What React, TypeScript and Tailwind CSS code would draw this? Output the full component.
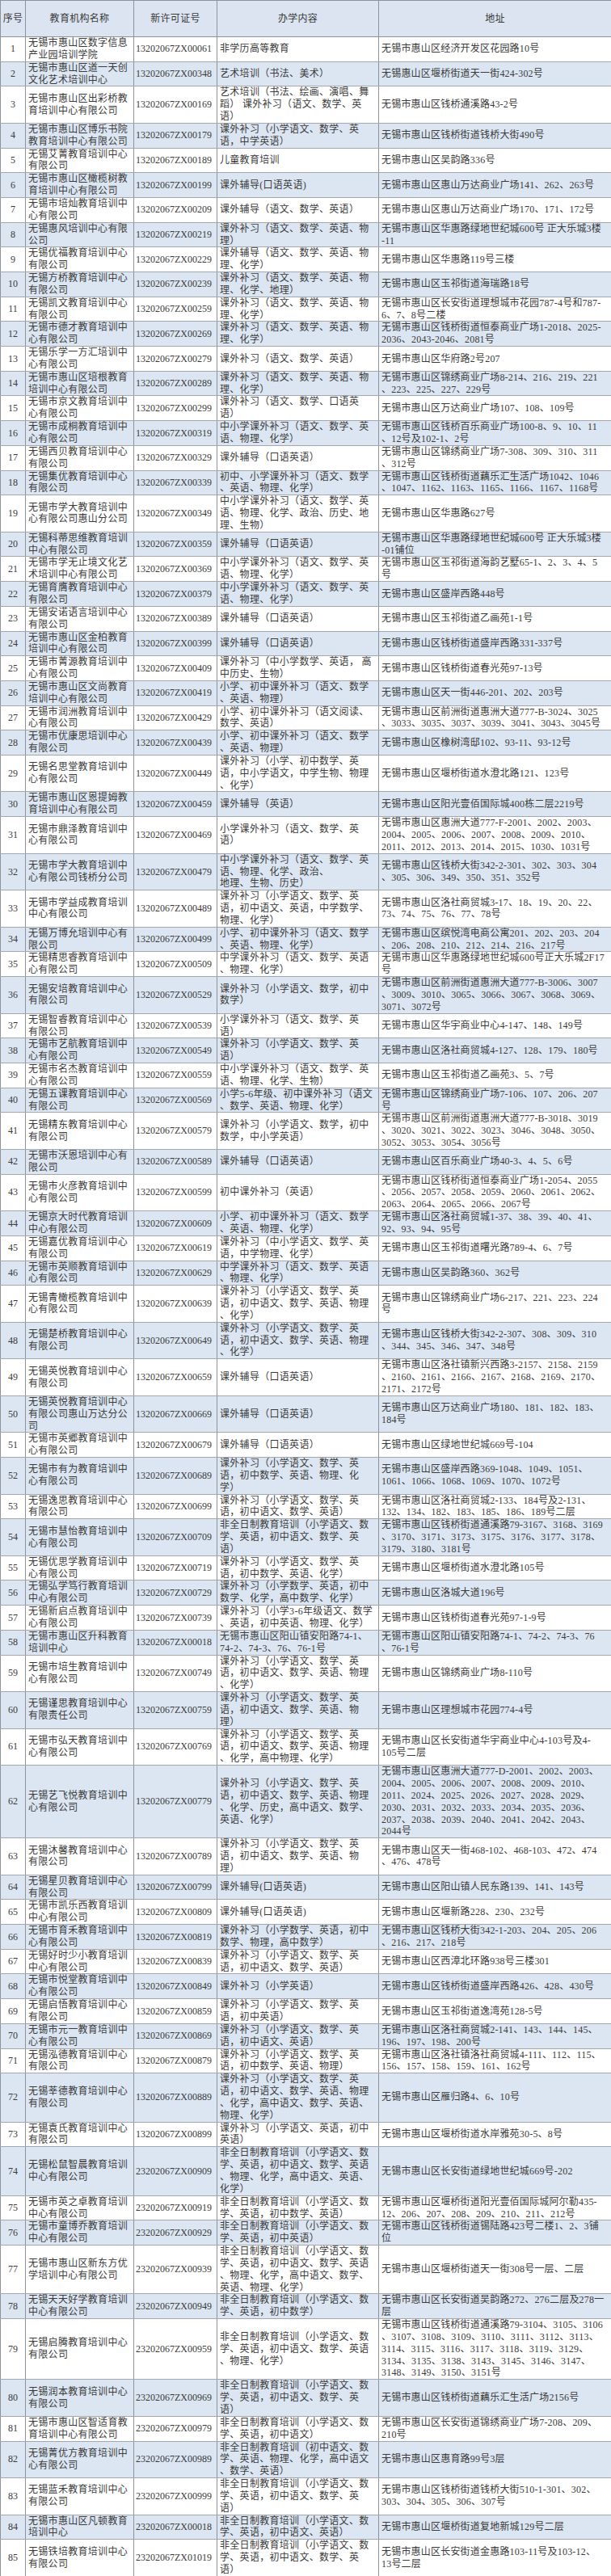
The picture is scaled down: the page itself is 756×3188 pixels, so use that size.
type Row = [string, string, string, string];

const rows: Row[] = [
  ['无锡市惠山区数字信息\n产业园培训学院', '13202067ZX00061', '非学历高等教育', '无锡市惠山区经济开发区花园路10号'],
  ['无锡市惠山区道一天创\n文化艺术培训中心', '13202067ZX00348', '艺术培训（书法、美术）', '无锡惠山区堰桥街道天一街424-302号'],
  ['无锡市惠山区出彩桥教\n育培训中心有限公司', '13202067ZX00169', '艺术培训（书法、绘画、演唱、舞\n蹈） 课外补习（语文、数学、英\n语）', '无锡市惠山区钱桥通溪路43-2号'],
  ['无锡市惠山区博乐书院\n教育培训中心有限公司', '13202067ZX00179', '课外补习（小学语文、数学、英\n语，中学英语）', '无锡市惠山区钱桥街道钱桥大街490号'],
  ['无锡艾菁教育培训中心\n有限公司', '13202067ZX00189', '儿童教育培训', '无锡市惠山区吴韵路336号'],
  ['无锡市惠山区橄榄树教\n育培训中心有限公司', '13202067ZX00199', '课外辅导(口语英语)', '无锡市惠山区惠山万达商业广场141、262、263号'],
  ['无锡市培灿教育培训中\n心有限公司', '13202067ZX00209', '课外辅导（语文、数学、英语）', '无锡市惠山区惠山万达商业广场170、171、172号'],
  ['无锡惠风培训中心有限\n公司', '13202067ZX00219', '课外补习（语文、数学、英语、物\n理）', '无锡市惠山区华惠路绿地世纪城600号 正大乐城3楼\n-11'],
  ['无锡优福教育培训中心\n有限公司', '13202067ZX00229', '课外辅导（语文、数学、英语、物\n理、化学）', '无锡市惠山区华惠路119号三楼'],
  ['无锡方桥教育培训中心\n有限公司', '13202067ZX00239', '课外补习（语文、数学、英语、物\n理、化学、地理）', '无锡市惠山区玉祁街道海瑞路18号'],
  ['无锡凯文教育培训中心\n有限公司', '13202067ZX00259', '课外补习（语文、数学、英语、物\n理、化学）', '无锡市惠山区长安街道理想城市花园787-4号和787-\n6、7、8号二楼'],
  ['无锡市德才教育培训中\n心有限公司', '13202067ZX00269', '课外补习（语文、数学、英语、物\n理、化学）', '无锡市惠山区钱桥街道恒泰商业广场1-2018、2025-\n2036、2043-2046、2081号'],
  ['无锡乐学一方汇培训中\n心有限公司', '13202067ZX00279', '课外补习（语文、数学、英语）', '无锡市惠山区华府路2号207'],
  ['无锡市惠山区培根教育\n培训中心有限公司', '13202067ZX00289', '课外补习（语文、数学、英语、物\n理、化学）', '无锡市惠山区锦绣商业广场8-214、216、219、221\n、223、225、227、229号'],
  ['无锡市京文教育培训中\n心有限公司', '13202067ZX00299', '课外补习（语文、数学、口语英\n语）', '无锡市惠山区万达商业广场107、108、109号'],
  ['无锡市成桐教育培训中\n心有限公司', '13202067ZX00319', '中小学课外补习（语文、数学、英\n语、物理、化学）', '无锡市惠山区钱桥百乐商业广场100-8、9、10、11\n、12号及102-1、2号'],
  ['无锡西贝教育培训中心\n有限公司', '13202067ZX00329', '课外辅导（口语英语）', '无锡市惠山区锦绣商业广场7-308、309、310、311\n、312号'],
  ['无锡集优教育培训中心\n有限公司', '13202067ZX00339', '初中、小学课外补习（语文、数学\n、英语、物理、化学）', '无锡市惠山区钱桥街道藕乐汇生活广场1042、1046\n、1047、1162、1163、1165、1166、1167、1168号'],
  ['无锡市学大教育培训中\n心有限公司惠山分公司', '13202067ZX00349', '中小学课外补习（语文、数学、英\n语、物理、化学、政治、历史、地\n理、生物）', '无锡市惠山区华惠路627号'],
  ['无锡科蒂思维教育培训\n中心有限公司', '13202067ZX00359', '课外辅导（口语英语）', '无锡市惠山区华惠路绿地世纪城600号 正大乐城3楼\n-01铺位'],
  ['无锡市学无止境文化艺\n术培训中心有限公司', '13202067ZX00369', '中小学课外补习（语文、数学、英\n语、物理、化学）', '无锡市惠山区玉祁街道海韵艺墅65-1、2、3、4、5\n号'],
  ['无锡育膺教育培训中心\n有限公司', '13202067ZX00379', '中小学课外补习（语文、数学、英\n语、物理、化学）', '无锡市惠山区盛岸西路448号'],
  ['无锡安诺语言培训中心\n有限公司', '13202067ZX00389', '课外辅导（口语英语）', '无锡市惠山区玉祁街道乙画苑1-1号'],
  ['无锡市惠山区金柏教育\n培训中心有限公司', '13202067ZX00399', '课外辅导（口语英语）', '无锡市惠山区钱桥街道盛岸西路331-337号'],
  ['无锡市菁源教育培训中\n心有限公司', '13202067ZX00409', '课外补习（中小学数学、英语， 高\n中历史、生物）', '无锡市惠山区钱桥街道春光苑97-13号'],
  ['无锡市惠山区文尚教育\n培训中心有限公司', '13202067ZX00419', '小学、初中课外补习（语文、数学\n、英语、物理）', '无锡市惠山区天一街446-201、202、203号'],
  ['无锡市润洲教育培训中\n心有限公司', '13202067ZX00429', '小学、初中课外补习（语文阅读、\n数学、英语）', '无锡市惠山区前洲街道惠洲大道777-B-3024、3025\n、3033、3035、3037、3039、3041、3043、3045号'],
  ['无锡市优康思培训中心\n有限公司', '13202067ZX00439', '小学、初中课外补习（语文、数学\n、英语、物理）', '无锡市惠山区橡树湾邸102、93-11、93-12号'],
  ['无锡名思堂教育培训中\n心有限公司', '13202067ZX00449', '课外补习（小学、初中数学、英\n语，中小学语文，中学生物、物理\n、化学）', '无锡市惠山区堰桥街道水澄北路121、123号'],
  ['无锡市惠山区恩提姆教\n育培训中心有限公司', '13202067ZX00459', '课外辅导（英语）', '无锡市惠山区阳光壹佰国际城400栋二层2219号'],
  ['无锡市鼎泽教育培训中\n心有限公司', '13202067ZX00469', '小学课外补习（语文、数学、英\n语）', '无锡市惠山区惠洲大道777-F-2001、2002、2003、\n2004、2005、2006、2007、2008、2009、2010、\n2011、2012、2013、2014、2015、1030、1031号'],
  ['无锡市学大教育培训中\n心有限公司钱桥分公司', '13202067ZX00479', '中小学课外补习（语文、数学、英\n语、物理、化学、政治、\n地理、生物、历史）', '无锡市惠山区钱桥大街342-2-301、302、303、304\n、305、306、349、350、351、352号'],
  ['无锡市学益成教育培训\n中心有限公司', '13202067ZX00489', '课外补习（小学语文、数学、英\n语，初中语文、英语，中学数学、\n物理、化学）', '无锡市惠山区洛社商贸城3-17、18、19、20、22、\n73、74、75、76、77、78号'],
  ['无锡万博允培训中心有\n限公司', '13202067ZX00499', '小学、初中课外补习（语文、数学\n、英语、物理、化学）', '无锡市惠山区缤悦湾电商公寓201、202、203、204\n、206、208、210、212、214、216、217号'],
  ['无锡精思睿教育培训中\n心有限公司', '13202067ZX00509', '中学课外补习（语文、数学、英语\n、物理、化学）', '无锡市惠山区华惠路绿地世纪城600号正大乐城2F17\n号'],
  ['无锡安培教育培训中心\n有限公司', '13202067ZX00529', '课外补习（小学语文、数学，初中\n数学）', '无锡市惠山区前洲街道惠洲大道777-B-3006、3007\n、3009、3010、3065、3066、3067、3068、3069、\n3071、3072号'],
  ['无锡智睿教育培训中心\n有限公司', '13202067ZX00539', '小学课外补习（语文、数学、英\n语）', '无锡市惠山区华宇商业中心4-147、148、149号'],
  ['无锡市艺航教育培训中\n心有限公司', '13202067ZX00549', '课外补习（小学语文、数学、英\n语）', '无锡市惠山区洛社商贸城4-127、128、179、180号'],
  ['无锡市名杰教育培训中\n心有限公司', '13202067ZX00559', '中小学课外补习（语文、数学、英\n语、物理、化学、生物）', '无锡市惠山区玉祁街道乙画苑3、5、7号'],
  ['无锡五课教育培训中心\n有限公司', '13202067ZX00569', '小学5-6年级、初中课外补习（语文\n、数学、英语、物理、化学）', '无锡市惠山区锦绣商业广场7-106、107、206、207\n号'],
  ['无锡精东教育培训中心\n有限公司', '13202067ZX00579', '课外补习（小学语文、数学，初中\n数学，中小学英语）', '无锡市惠山区前洲街道惠洲大道777-B-3018、3019\n、3020、3021、3022、3023、3046、3048、3050、\n3052、3053、3054、3056号'],
  ['无锡市沃恩培训中心有\n限公司', '13202067ZX00589', '课外辅导（口语英语）', '无锡市惠山区百乐商业广场40-3、4、5、6号'],
  ['无锡市火彦教育培训中\n心有限公司', '13202067ZX00599', '初中课外补习（英语）', '无锡市惠山区钱桥街道恒泰商业广场1-2054、2055\n、2056、2057、2058、2059、2060、2061、2062、\n2063、2064、2065、2066、2067号'],
  ['无锡京大时代教育培训\n中心有限公司', '13202067ZX00609', '小学、初中课外补习（语文、数学\n、英语、物理、化学）', '无锡市惠山区洛社商贸城1-37、38、39、40、41、\n92、93、94、95号'],
  ['无锡嘉优教育培训中心\n有限公司', '13202067ZX00619', '课外补习（中小学语文、数学、英\n语，中学物理、化学）', '无锡市惠山区玉祁街道曙光路789-4、6、7号'],
  ['无锡市英顺教育培训中\n心有限公司', '13202067ZX00629', '中学课外补习（语文、数学、英语\n、物理、化学）', '无锡市惠山区吴韵路360、362号'],
  ['无锡青橄榄教育培训中\n心有限公司', '13202067ZX00639', '课外补习（小学语文、数学、英\n语，初中语文、数学、英语、物理\n、化学）', '无锡市惠山区锦绣商业广场6-217、221、223、224\n号'],
  ['无锡楚桥教育培训中心\n有限公司', '13202067ZX00649', '课外补习（小学语文、数学、英\n语，初中语文、数学、英语、物理\n、化学）', '无锡市惠山区钱桥大街342-2-307、308、309、310\n、344、345、346、347、348号'],
  ['无锡英悦教育培训中心\n有限公司', '13202067ZX00659', '课外辅导（口语英语）', '无锡市惠山区洛社镇新兴西路3-2157、2158、2159\n、2160、2161、2166、2167、2168、2169、2170、\n2171、2172号'],
  ['无锡英悦教育培训中心\n有限公司惠山万达分公\n司', '13202067ZX00669', '课外辅导（口语英语）', '无锡市惠山区万达商业广场180、181、182、183、\n184号'],
  ['无锡市英郷教育培训中\n心有限公司', '13202067ZX00679', '课外辅导（口语英语）', '无锡市惠山区绿地世纪城669号-104'],
  ['无锡市有为教育培训中\n心有限公司', '13202067ZX00689', '课外补习（小学语文、数学、英\n语，初中数学、英语、物理、化\n学）', '无锡市惠山区盛岸西路369-1048、1049、1051、\n1061、1066、1068、1069、1070、1072号'],
  ['无锡逸思教育培训中心\n有限公司', '13202067ZX00699', '课外补习（小学语文、数学、英\n语，初中语文、数学、英语）', '无锡市惠山区洛社商贸城2-133、184号及2-131、\n132、134、182、183、185、186、189号二层'],
  ['无锡市慧怡教育培训中\n心有限公司', '13202067ZX00709', '非全日制教育培训（小学语文、数\n学、英语，初中语文、数学、英\n语）', '无锡市惠山区钱桥街道通溪路79-3167、3168、3169\n、3170、3171、3173、3175、3176、3177、3178、\n3179、3180、3181号'],
  ['无锡优思学教育培训中\n心有限公司', '13202067ZX00719', '课外补习（小学语文、数学、英\n语，初中数学、英语、化学）', '无锡市惠山区堰桥街道水澄北路105号'],
  ['无锡弘学笃行教育培训\n中心有限公司', '13202067ZX00729', '课外补习（小学数学、英语，初中\n数学、化学，高中数学、化学）', '无锡市惠山区洛城大道196号'],
  ['无锡新启点教育培训中\n心有限公司', '13202067ZX00739', '课外补习（小学3-6年级语文、数学\n、英语，初中英语、物理、化学）', '无锡市惠山区钱桥街道春光苑97-1-9号'],
  ['无锡市惠山区升科教育\n培训中心', '13202067ZX00018', '无锡市惠山区阳山镇安阳路74-1、\n74-2、74-3、76、76-1号', '无锡市惠山区阳山镇安阳路74-1、74-2、74-3、76\n、76-1号'],
  ['无锡市培生教育培训中\n心有限公司', '13202067ZX00749', '课外补习（小学语文、数学、英\n语，初中语文、数学、英语、物理\n、化学）', '无锡市惠山区锦绣商业广场8-110号'],
  ['无锡谨思教育培训中心\n有限责任公司', '13202067ZX00759', '课外补习（小学语文、数学、英\n语，初中语文、数学、英语、物\n理）', '无锡市惠山区理想城市花园774-4号'],
  ['无锡市弘天教育培训中\n心有限公司', '13202067ZX00769', '课外补习（小学语文、数学、英\n语，初中语文、数学、英语、物理\n、化学，高中物理、化学）', '无锡市惠山区长安街道华宇商业中心4-103号及4-\n105号二层'],
  ['无锡艺飞悦教育培训中\n心有限公司', '13202067ZX00779', '课外补习（小学语文、数学、英\n语，初中语文、数学、英语、物理\n、化学、历史，高中语文、数学、\n英语、化学）', '无锡市惠山区惠洲大道777-D-2001、2002、2003、\n2004、2005、2006、2007、2008、2009、2010、\n2011、2024、2025、2026、2027、2028、2029、\n2030、2031、2032、2033、2034、2035、2036、\n2037、2038、2039、2040、2041、2042、2043、\n2044号'],
  ['无锡沐馨教育培训中心\n有限公司', '13202067ZX00789', '课外补习（小学语文、数学、英\n语，初中语文、数学、英语、物\n理）', '无锡市惠山区天一街468-102、468-103、472、474\n、476、478号'],
  ['无锡星贝教育培训中心\n有限公司', '13202067ZX00799', '课外辅导(口语英语)', '无锡市惠山区阳山镇人民东路139、141、143号'],
  ['无锡市凯乐西教育培训\n中心有限公司', '13202067ZX00809', '课外辅导(口语英语)', '无锡市惠山区堰新路228、230、232号'],
  ['无锡市育禾教育培训中\n心有限公司', '13202067ZX00819', '课外补习（小学数学、英语，初中\n数学、物理，高中数学）', '无锡市惠山区钱桥大街342-1-203、204、205、206\n、216、217、218号'],
  ['无锡好时少小教育培训\n中心有限公司', '13202067ZX00839', '课外补习（小学语文、数学、英\n语，初中语文、数学、英语）', '无锡市惠山区西漳北环路938号三楼301'],
  ['无锡市悦堂教育培训中\n心有限公司', '13202067ZX00849', '课外补习（小学英语）', '无锡市惠山区钱桥街道盛岸西路426、428、430号'],
  ['无锡启悟教育培训中心\n有限公司', '13202067ZX00859', '课外补习（小学语文、数学、英\n语，初中英语）', '无锡市惠山区玉祁街道逸湾苑128-5号'],
  ['无锡市元一教育培训中\n心有限公司', '13202067ZX00869', '课外补习（小学语文、数学、英\n语，初中语文、英语）', '无锡市惠山区洛社商贸城2-141、143、144、145、\n196、197、198、200号'],
  ['无锡泓德教育培训中心\n有限公司', '13202067ZX00879', '课外补习（小学语文、数学、英\n语，初中数学、英语、物理）', '无锡市惠山区洛社镇洛社商贸城4-111、112、115、\n156、157、158、159、161、162号'],
  ['无锡莘德教育培训中心\n有限公司', '13202067ZX00889', '课外补习（小学语文、数学、英\n语，初中语文、数学、英语、物理\n、化学，高中语文、数学、英语、\n物理、化学）', '无锡市惠山区雁归路4、6、10号'],
  ['无锡袁氏教育培训中心\n有限公司', '13202067ZX00899', '课外补习（小学语文、英语，初中\n英语）', '无锡市惠山区堰桥街道水岸雅苑30-5、8号'],
  ['无锡松鼠智晨教育培训\n中心有限公司', '23202067ZX00909', '非全日制教育培训（小学语文、数\n学、英语，初中语文、数学、英语\n、物理、化学，高中语文、英语、\n化学）', '无锡市惠山区长安街道绿地世纪城669号-202'],
  ['无锡市英之卓教育培训\n中心有限公司', '23202067ZX00919', '非全日制教育培训（小学语文、数\n学、英语，初中数学、英语）', '无锡市惠山区堰桥街道阳光壹佰国际城阿尔勒435-\n12、206、207、208、209、210、211、212号'],
  ['无锡市童博乔教育培训\n中心有限公司', '23202067ZX00929', '非全日制教育培训（小学语文、数\n学、英语，初中英语）', '无锡市惠山区钱桥街道锡陆路423号二楼1、2、3铺\n位'],
  ['无锡市惠山区新东方优\n学培训中心有限公司', '23202067ZX00939', '非全日制教育培训（小学语文、数\n学、英语，初中语文、数学、英语\n、物理、化学，高中语文、数学、\n英语、物理、化学）', '无锡市惠山区堰桥街道天一街308号一层、二层'],
  ['无锡天天好学教育培训\n中心有限公司', '23202067ZX00949', '非全日制教育培训（小学语文、数\n学、英语，初中数学）', '无锡市惠山区长安街道吴韵路272、276二层及278一\n层'],
  ['无锡启腾教育培训中心\n有限公司', '23202067ZX00959', '非全日制教育培训（小学语文、数\n学、英语，初中语文、数学、英语\n、物理、化学）', '无锡市惠山区钱桥街道通溪路79-3104、3105、3106\n、3107、3108、3109、3110、3111、3112、3113、\n3114、3115、3116、3117、3118、3119、3129、\n3134、3135、3138、3143、3145、3146、3147、\n3148、3149、3150、3151号'],
  ['无锡润本教育培训中心\n有限公司', '23202067ZX00969', '非全日制教育培训（小学语文、数\n学、英语，初中语文、数学、英\n语）', '无锡市惠山区钱桥街道藕乐汇生活广场2156号'],
  ['无锡市惠山区智适育教\n育培训中心有限公司', '23202067ZX00979', '非全日制教育培训（小学语文、数\n学、英语，初中语文）', '无锡市惠山区长安街道锦绣商业广场7-208、209、\n210号'],
  ['无锡菁优方教育培训中\n心有限公司', '23202067ZX00989', '非全日制教育培训（初中语文、数\n学、英语、物理、化学，高中语文\n、数学、英语）', '无锡市惠山区惠育路99号3层'],
  ['无锡蓝禾教育培训中心\n有限公司', '23202067ZX00999', '非全日制教育培训（小学语文、数\n学、英语，初中语文、数学、英\n语）', '无锡市惠山区钱桥街道钱桥大街510-1-301、302、\n303、304、305、306、307号'],
  ['无锡市惠山区凡顿教育\n培训中心', '23202067ZX00018', '非全日制教育培训（小学语文、数\n学、英语，初中语文、英语）', '无锡市惠山区堰桥街道复地新城129号二层'],
  ['无锡铁培教育培训中心\n有限公司', '23202067ZX01019', '非全日制教育培训（小学语文、数\n学、英语，初中语文、数学、英\n语）', '无锡市惠山区长安街道金惠路103-11号及103-12、\n13号二层'],
];

const headers = ['序号', '教育机构名称', '新许可证号', '办学内容', '地址'];

export default function App() {
  return (
    <div
      className="w-[756px] bg-white text-[#3a3a3a]"
      style={{ fontFamily: '"Liberation Serif", "Noto Sans CJK SC", serif' }}
    >
      <table className="w-[756px] table-fixed border-collapse text-[12px] leading-[14.84px]">
        <colgroup>
          <col className="w-[31px]" />
          <col className="w-[134px]" />
          <col className="w-[103px]" />
          <col className="w-[200px]" />
          <col className="w-[288px]" />
        </colgroup>
        <thead>
          <tr className="h-[45px] bg-[#dbe4f0]">
            {headers.map((h) => (
              <th
                key={h}
                className="border border-[#8d939b] text-center align-middle font-normal tracking-[0.3px]"
              >
                {h}
              </th>
            ))}
          </tr>
        </thead>
        <tbody>
          {rows.map((r, i) => (
            <tr key={i} className={i % 2 === 1 ? 'bg-[#dce6f2]' : 'bg-white'}>
              <td className="border-x border-x-[#8d939b] border-b border-b-[#a3a8ae] p-0 text-center align-middle">
                {i + 1}
              </td>
              <td className="border-x border-x-[#8d939b] border-b border-b-[#a3a8ae] py-0 pl-[3px] pr-0 align-middle whitespace-pre tracking-[0.3px] overflow-hidden">
                {r[0]}
              </td>
              <td className="border-x border-x-[#8d939b] border-b border-b-[#a3a8ae] py-0 pl-[2px] pr-0 align-middle whitespace-pre">
                {r[1]}
              </td>
              <td className="border-x border-x-[#8d939b] border-b border-b-[#a3a8ae] py-0 pl-[3px] pr-0 align-middle whitespace-pre tracking-[0.3px] overflow-hidden">
                {r[2]}
              </td>
              <td className="border-x border-x-[#8d939b] border-b border-b-[#a3a8ae] py-0 pl-[3px] pr-0 align-middle whitespace-pre tracking-[0.2px] overflow-hidden">
                {r[3]}
              </td>
            </tr>
          ))}
        </tbody>
      </table>
    </div>
  );
}
